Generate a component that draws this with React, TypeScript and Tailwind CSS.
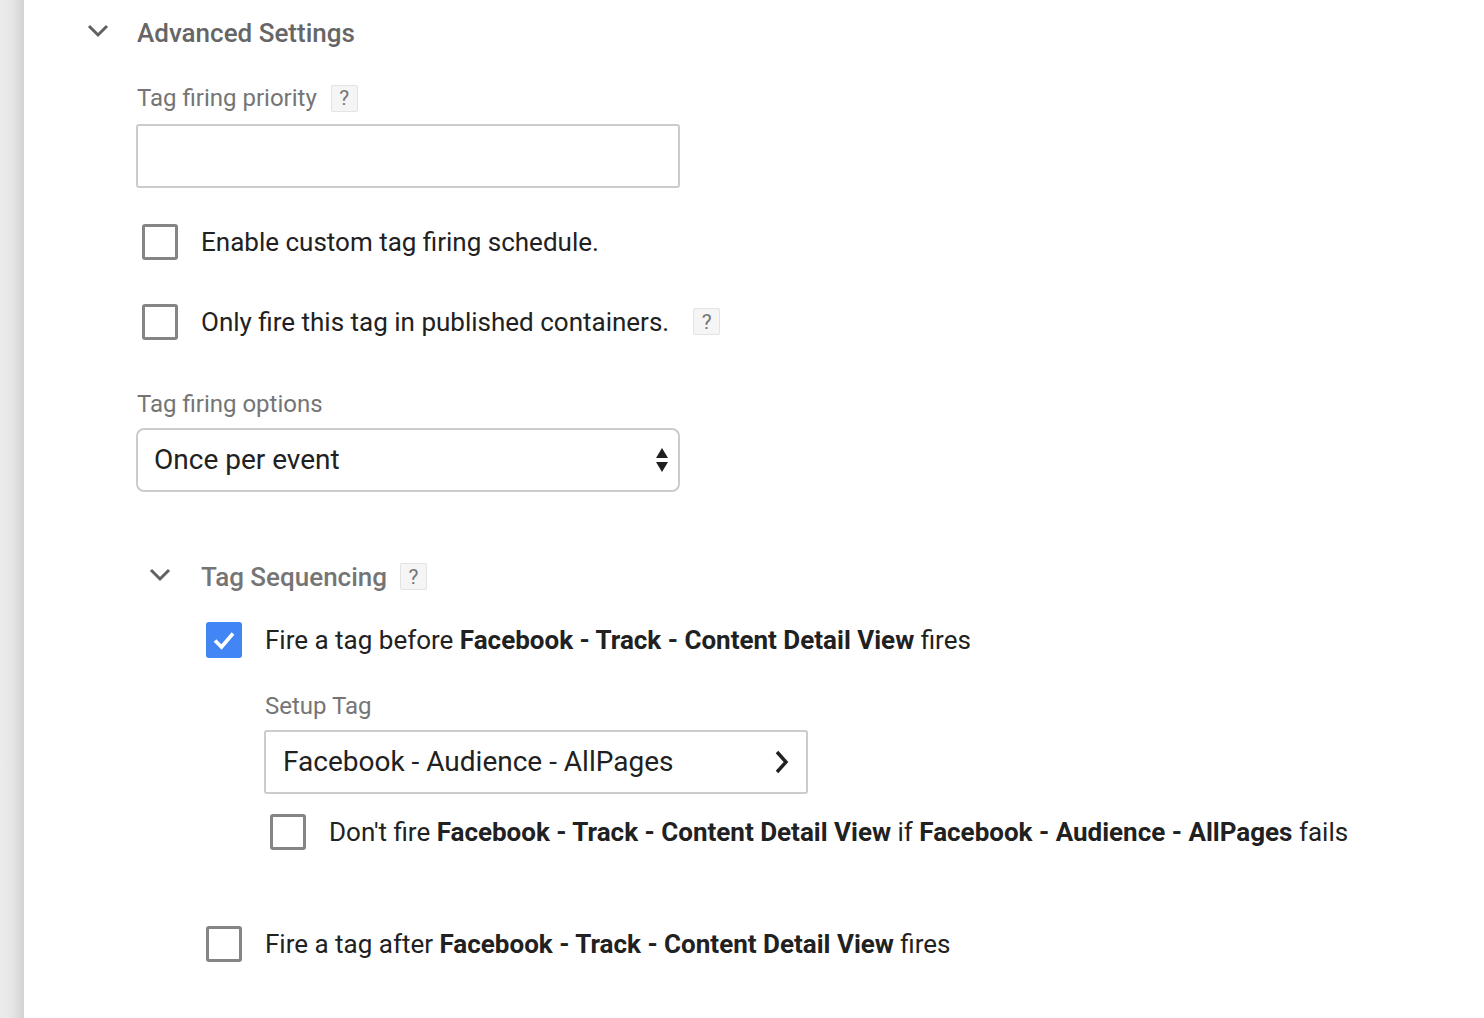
import React from "react";

const font = { fontFamily: "Roboto, 'Noto Sans', Arial, sans-serif" };

function Help() {
  return (
    <span className="inline-flex h-[27px] w-[27px] items-center justify-center rounded-[2px] border border-[#e3e3e3] bg-[#f5f5f5] pt-[1px] text-[21px] leading-none text-[#757575]">
      ?
    </span>
  );
}

function Box({ checked = false }: { checked?: boolean }) {
  if (checked) {
    return (
      <span className="flex h-[36px] w-[36px] shrink-0 items-center justify-center rounded-[3px] bg-[#4285f4]">
        <svg width="26" height="26" viewBox="0 0 26 26">
          <path d="M4 13.5 L10.5 20 L22 6.5" fill="none" stroke="#fff" strokeWidth="3.6" />
        </svg>
      </span>
    );
  }
  return <span className="block h-[36px] w-[36px] shrink-0 rounded-[3px] border-[3px] border-[#858585] bg-white" />;
}

function ChevronDown() {
  return (
    <svg width="22" height="14" viewBox="0 0 22 14">
      <path d="M2 2 L11 11 L20 2" fill="none" stroke="#616161" strokeWidth="3" />
    </svg>
  );
}

export default function App() {
  return (
    <div style={font} className="flex min-h-[1018px] w-full bg-white">
      <div className="w-[24px] shrink-0 bg-gradient-to-r from-[#ececec] via-[#e6e6e6] to-[#d3d3d3]" />
      <div className="flex-1 bg-white pl-[63px]">
        {/* Header */}
        <div className="flex h-[66px] items-center">
          <div className="flex w-[50px] items-center pb-[4px]">
            <ChevronDown />
          </div>
          <span className="text-[26px] font-medium text-[#666666]">Advanced Settings</span>
        </div>

        <div className="pl-[50px]">
          {/* Tag firing priority */}
          <div className="mt-[18px] flex h-[28px] items-center gap-[14px]">
            <span className="text-[24px] text-[#757575]">Tag firing priority</span>
            <Help />
          </div>
          <div className="ml-[-1px] mt-[12px] h-[64px] w-[544px] rounded-[3px] border-2 border-[#cccccc] bg-white" />

          {/* Checkboxes */}
          <div className="mt-[36px] flex h-[36px] items-center pl-[5px]">
            <Box />
            <span className="ml-[23px] text-[26px] text-[#212121]">Enable custom tag firing schedule.</span>
          </div>
          <div className="mt-[44px] flex h-[36px] items-center pl-[5px]">
            <Box />
            <span className="ml-[23px] text-[26px] text-[#212121]">Only fire this tag in published containers.</span>
            <span className="ml-[24px]">
              <Help />
            </span>
          </div>

          {/* Tag firing options */}
          <div className="mt-[50px] flex h-[28px] items-center">
            <span className="text-[24px] text-[#757575]">Tag firing options</span>
          </div>
          <div className="ml-[-1px] mt-[10px] flex h-[64px] w-[544px] items-center justify-between rounded-[8px] border-2 border-[#cccccc] bg-white pl-[16px] pr-[8px]">
            <span className="text-[28px] text-[#212121]">Once per event</span>
            <svg width="16" height="30" viewBox="0 0 16 30">
              <path d="M2 13 L8 3 L14 13 Z" fill="#1f1f1f" />
              <path d="M2 17 L8 27 L14 17 Z" fill="#1f1f1f" />
            </svg>
          </div>

          {/* Tag Sequencing */}
          <div className="mt-[71px] flex h-[28px] items-center">
            <div className="flex w-[64px] items-center pb-[4px] pl-[12px]">
              <ChevronDown />
            </div>
            <span className="text-[26px] font-medium text-[#757575]">Tag Sequencing</span>
            <span className="ml-[13px]">
              <Help />
            </span>
          </div>

          <div className="pl-[69px]">
            <div className="mt-[31px] flex h-[36px] items-center">
              <Box checked />
              <span className="ml-[23px] text-[26px] text-[#212121]">
                Fire a tag before <b className="font-bold">Facebook - Track - Content Detail View</b> fires
              </span>
            </div>

            <div className="pl-[58px]">
              <div className="mt-[34px] flex h-[28px] items-center pl-[1px]">
                <span className="text-[24px] text-[#757575]">Setup Tag</span>
              </div>
              <div className="mt-[10px] flex h-[64px] w-[544px] items-center justify-between rounded-[3px] border-2 border-[#cccccc] bg-white pl-[17px] pr-[16px]">
                <span className="text-[28px] text-[#212121]">Facebook - Audience - AllPages</span>
                <svg width="16" height="26" viewBox="0 0 16 26">
                  <path d="M3 3 L12 13 L3 23" fill="none" stroke="#212121" strokeWidth="3.4" />
                </svg>
              </div>
              <div className="mt-[20px] flex h-[36px] items-center pl-[6px]">
                <Box />
                <span className="ml-[23px] whitespace-nowrap text-[26px] text-[#212121]">
                  Don't fire <b className="font-bold">Facebook - Track - Content Detail View</b> if{" "}
                  <b className="font-bold">Facebook - Audience - AllPages</b> fails
                </span>
              </div>
            </div>

            <div className="mt-[76px] flex h-[36px] items-center">
              <Box />
              <span className="ml-[23px] text-[26px] text-[#212121]">
                Fire a tag after <b className="font-bold">Facebook - Track - Content Detail View</b> fires
              </span>
            </div>
          </div>
        </div>
      </div>
    </div>
  );
}
